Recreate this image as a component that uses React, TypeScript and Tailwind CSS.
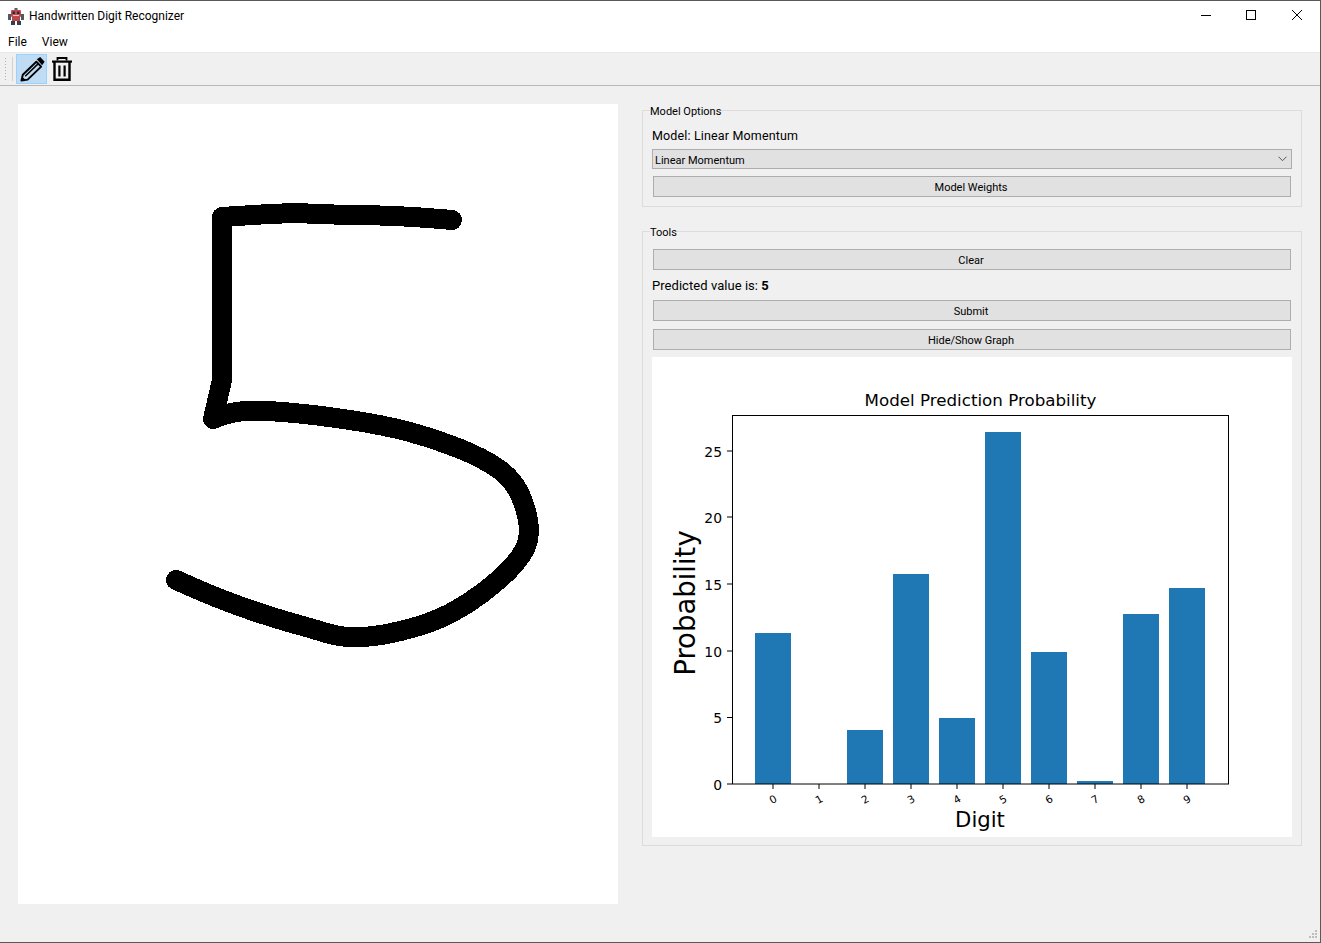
import React from 'react';

const uiFont = { fontFamily: 'Roboto, "Noto Sans", sans-serif' };

// centre line of the drawn digit, in canvas coordinates
const strokePoints: [number, number][] = [
  [434, 116], [400, 113], [350, 111], [332, 111], [300, 110], [279, 109], [250, 110], [204, 113],
];
const curvePoints: [number, number][] = [
  [195, 315], [212, 308], [242, 306], [299, 311], [365, 321], [415, 334], [465, 354], [495, 375],
  [509, 406], [512, 435], [501, 456], [480, 477], [450, 500], [416, 518], [372, 530], [340, 534],
  [318, 532], [299, 526], [249, 512], [199, 494], [158, 476],
];

function smooth(points: [number, number][]) {
  let d = `M${points[0][0]} ${points[0][1]}`;
  for (let i = 1; i < points.length - 1; i++) {
    const mx = (points[i][0] + points[i + 1][0]) / 2;
    const my = (points[i][1] + points[i + 1][1]) / 2;
    d += ` Q${points[i][0]} ${points[i][1]} ${mx} ${my}`;
  }
  const last = points[points.length - 1];
  return d + ` L${last[0]} ${last[1]}`;
}

const bars = [
  { x: 103, top: 276 },
  { x: 149, top: 427 },
  { x: 195, top: 373 },
  { x: 241, top: 217 },
  { x: 287, top: 361 },
  { x: 333, top: 75 },
  { x: 379, top: 295 },
  { x: 425, top: 424 },
  { x: 471, top: 257 },
  { x: 517, top: 231 },
];

const yTicks = [
  { label: '0', y: 427 },
  { label: '5', y: 360.5 },
  { label: '10', y: 294 },
  { label: '15', y: 227 },
  { label: '20', y: 160 },
  { label: '25', y: 94 },
];

function RobotIcon() {
  return (
    <svg width="16" height="17" viewBox="0 0 16 17" className="mt-[7px] shrink-0">
      <rect x="6.5" y="0" width="3" height="2" fill="#55606a" />
      <rect x="3" y="2" width="10" height="7" rx="1" fill="#c8484c" />
      <rect x="4.5" y="3.5" width="2.5" height="2.5" fill="#2b2f36" />
      <rect x="9" y="3.5" width="2.5" height="2.5" fill="#2b2f36" />
      <rect x="5" y="7" width="6" height="1" fill="#e9c9c9" />
      <rect x="0" y="6" width="3" height="6" fill="#4d5a66" />
      <rect x="13" y="6" width="3" height="6" fill="#4d5a66" />
      <rect x="4" y="9" width="8" height="4" fill="#b9474c" />
      <rect x="3" y="13" width="4" height="4" fill="#34404c" />
      <rect x="9" y="13" width="4" height="4" fill="#34404c" />
    </svg>
  );
}

function PencilIcon() {
  return (
    <svg width="30" height="30" viewBox="0 0 30 30">
      <path d="M4.6 27 L6 21 L20 7.5 L25 12.5 L11 26 Z" fill="none" stroke="#000" strokeWidth="2" strokeLinejoin="round" />
      <path d="M8.5 22.5 L21.5 10" stroke="#000" strokeWidth="1.6" />
      <path d="M4.6 27 L5.4 23 L8.8 26 Z" fill="#000" />
      <path d="M20.5 5 L24 2.6 L28.6 7.4 L26 11 Z" fill="#000" />
    </svg>
  );
}

function TrashIcon() {
  return (
    <svg width="20" height="24" viewBox="0 0 20 24">
      <path d="M5.5 3.5 V1 H14.5 V3.5" fill="none" stroke="#000" strokeWidth="1.8" />
      <rect x="0" y="3.5" width="20" height="2.2" fill="#000" />
      <path d="M2.5 5 V22.7 H17.5 V5" fill="none" stroke="#000" strokeWidth="2.4" />
      <rect x="6.3" y="8.5" width="2.2" height="11" fill="#000" />
      <rect x="11.5" y="8.5" width="2.2" height="11" fill="#000" />
    </svg>
  );
}

function QtButton({ label }: { label: string }) {
  return (
    <button className="mx-px block h-[21px] w-[638px] border border-[#adadad] bg-[#e1e1e1] pr-[2px] pt-[2px] text-center text-[11px] leading-[16px] text-black">
      {label}
    </button>
  );
}

function Chart() {
  return (
    <svg width="640" height="480" viewBox="0 0 640 480" className="block bg-white" style={{ fontFamily: '"DejaVu Sans", sans-serif' }}>
      <text x="328.5" y="49" textAnchor="middle" fontSize="16.7" fill="#000">Model Prediction Probability</text>
      {bars.map((b) => (
        <rect key={b.x} x={b.x} y={b.top} width="36" height={427 - b.top} fill="#1f77b4" />
      ))}
      <rect x="80.5" y="58.5" width="496" height="368.5" fill="none" stroke="#000" strokeWidth="1" />
      {yTicks.map((t) => (
        <g key={t.label}>
          <line x1="75" x2="80" y1={t.y} y2={t.y} stroke="#000" />
          <text x="70" y={t.y + 5.5} textAnchor="end" fontSize="13.9" fill="#000">{t.label}</text>
        </g>
      ))}
      {bars.map((b, i) => (
        <g key={i}>
          <line x1={b.x + 18} x2={b.x + 18} y1="427" y2="432" stroke="#000" />
          <text
            x={b.x + 18}
            y="446"
            textAnchor="middle"
            fontSize="10.5"
            fill="#000"
            transform={`rotate(-30 ${b.x + 18} 442)`}
          >
            {i}
          </text>
        </g>
      ))}
      <text x="328" y="470" textAnchor="middle" fontSize="21.2" fill="#000">Digit</text>
      <text x="0" y="0" textAnchor="middle" fontSize="27.5" fill="#000" transform="translate(43 246) rotate(-90)">Probability</text>
    </svg>
  );
}

export default function App() {
  return (
    <div className="relative flex h-[943px] w-[1321px] flex-col overflow-hidden border-t border-r border-b border-[#595959] bg-[#f0f0f0] text-black" style={uiFont}>
      {/* title bar */}
      <div className="flex h-[31px] shrink-0 items-start bg-white pl-2">
        <RobotIcon />
        <span className="ml-[5px] text-[12px] leading-[30px]">Handwritten Digit Recognizer</span>
        <div className="ml-auto flex items-start">
          <svg width="46" height="30" viewBox="0 0 46 30"><path d="M19 14.5 H29" stroke="#000" /></svg>
          <svg width="46" height="30" viewBox="0 0 46 30"><rect x="18.5" y="9.5" width="9" height="9" fill="none" stroke="#000" /></svg>
          <svg width="46" height="30" viewBox="0 0 46 30"><path d="M18 9 L28 19 M28 9 L18 19" stroke="#000" /></svg>
        </div>
      </div>
      {/* menu */}
      <div className="flex h-[21px] shrink-0 items-center gap-[15px] border-b border-[#e8e8e8] bg-white pl-2 text-[12px]">
        <span>File</span>
        <span>View</span>
      </div>
      {/* toolbar */}
      <div className="flex h-[33px] shrink-0 items-center border-b border-[#b8b8b8] bg-[#f0f0f0] pl-1">
        <div className="h-[25px] w-[3px] bg-[radial-gradient(#b0b0b0_1px,transparent_1px)] bg-[length:3px_3px]" />
        <div className="ml-[5px] h-[24px] w-px bg-[#d0d0d0]" />
        <div className="ml-[3px] flex h-[30px] w-[31px] items-center justify-center border border-[#99d1ff] bg-[#bfdcf4]">
          <PencilIcon />
        </div>
        <div className="ml-[5px]">
          <TrashIcon />
        </div>
      </div>
      {/* main */}
      <div className="flex min-h-0 flex-1 pl-[18px] pt-[18px]">
        <div className="h-[800px] w-[600px] shrink-0 bg-white">
          <svg width="600" height="800" viewBox="0 0 600 800" className="block">
            <g fill="none" stroke="#000" strokeWidth="20" strokeLinecap="round" strokeLinejoin="round" shapeRendering="crispEdges">
              <path d={smooth(strokePoints) + ' L204 276 L195 315'} />
              <path d={smooth(curvePoints)} />
            </g>
          </svg>
        </div>
        <div className="ml-6 flex w-[660px] flex-col gap-[17px] pt-0">
          <fieldset className="h-[104px] border border-[#dcdcdc] px-[9px] -mt-[1px]">
            <legend className="ml-[-2px] h-[14px] pt-[2px] text-[11px] leading-[14px]">Model Options</legend>
            <div className="mt-[10px] text-[12.5px] leading-[18px] tracking-[0.15px]">Model: Linear Momentum</div>
            <div className="mt-[4px] flex h-[20px] w-[640px] items-center justify-between border border-[#adadad] bg-[#e1e1e1] pl-[2px] pr-[4px] pt-[4px] text-[11px]">
              <span>Linear Momentum</span>
              <svg width="9" height="6" viewBox="0 0 9 6" className="-mt-[4px]"><path d="M0.5 0.7 L4.5 4.7 L8.5 0.7" fill="none" stroke="#555" strokeWidth="1" /></svg>
            </div>
            <div className="mt-[7px]">
              <QtButton label="Model Weights" />
            </div>
          </fieldset>
          <fieldset className="h-[622px] border border-[#dcdcdc] px-[9px]">
            <legend className="ml-[-2px] h-[14px] pt-[2px] text-[11px] leading-[14px]">Tools</legend>
            <div className="mt-[11px]">
              <QtButton label="Clear" />
            </div>
            <div className="mt-[7px] text-[13px] leading-[18px] tracking-[0.05px]">
              Predicted value is: <b>5</b>
            </div>
            <div className="mt-[5px]">
              <QtButton label="Submit" />
            </div>
            <div className="mt-[8px]">
              <QtButton label="Hide/Show Graph" />
            </div>
            <div className="mt-[7px]">
              <Chart />
            </div>
          </fieldset>
        </div>
      </div>
      {/* size grip */}
      <div className="absolute left-[1309px] top-[929px] grid grid-cols-3 gap-px">
        {[0, 0, 1, 0, 1, 1, 1, 1, 1].map((on, i) => (
          <div key={i} className={on ? 'h-[2px] w-[2px] bg-[#bdbdbd]' : 'h-[2px] w-[2px]'} />
        ))}
      </div>
    </div>
  );
}
